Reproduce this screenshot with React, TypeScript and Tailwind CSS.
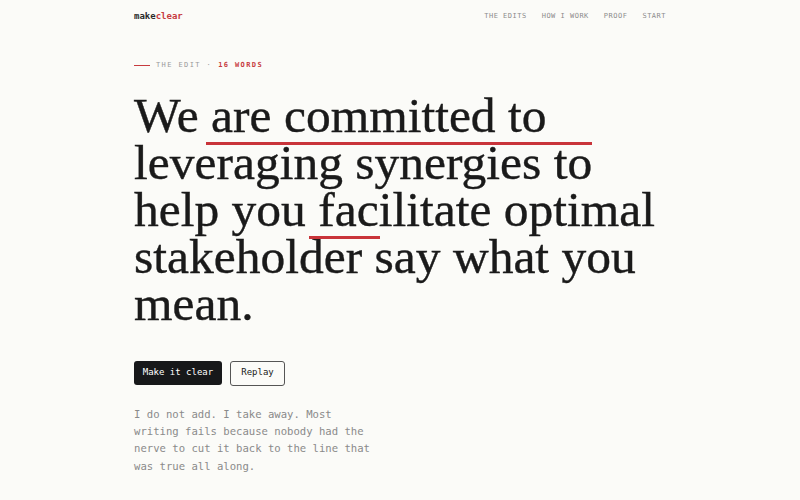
import React from "react"

const mono = "font-['DejaVu_Sans_Mono','Liberation_Mono',monospace]"
const serif = "font-['Liberation_Serif','DejaVu_Serif',serif]"

const navItems = ["THE EDITS", "HOW I WORK", "PROOF", "START"]

export default function App() {
  return (
    <main className="min-h-screen bg-[#fbfbf8] text-[#1a1a1a]">
      <div className="mx-auto w-[532px]">
        {/* Top bar */}
        <header className="flex h-[33px] items-center justify-between">
          <div className={`${mono} text-[9px] font-bold`}>
            <span className="text-[#2a2a2a]">make</span>
            <span className="text-[#c73b3f]">clear</span>
          </div>
          <nav className={`${mono} flex gap-[15px] text-[7px] tracking-[0.5px] text-[#8c8c8c]`}>
            {navItems.map((item) => (
              <a key={item} href="#">
                {item}
              </a>
            ))}
          </nav>
        </header>

        {/* Eyebrow */}
        <div className={`${mono} mt-[27px] flex items-center gap-[6px] text-[7px] tracking-[0.2em]`}>
          <span className="h-px w-[16px] bg-[#c73b3f]" />
          <span className="text-[#9a9a9a]">THE EDIT ·</span>
          <span className="font-bold text-[#c73b3f]">16 WORDS</span>
        </div>

        {/* Headline with the strike-through edits drawn under the cut words */}
        <h1 className={`${serif} mt-[21px] text-[49.5px] leading-[47px] text-[#1a1a1a] [-webkit-text-stroke:0.4px_#1a1a1a]`}>
          <span className="block">
            We{" "}
            <span className="relative">
              are committed to
              <span className="absolute left-[-5px] top-[54px] h-[3px] w-[386px] bg-[#c9343a]" />
            </span>
          </span>
          <span className="block">leveraging synergies to</span>
          <span className="block">
            help you{" "}
            <span className="relative">
              facilitate
              <span className="absolute left-[-9px] top-[54px] h-[3px] w-[71px] bg-[#c9343a]" />
            </span>{" "}
            optimal
          </span>
          <span className="block">stakeholder say what you</span>
          <span className="block">mean.</span>
        </h1>

        {/* Actions */}
        <div className={`${mono} mt-[34px] flex gap-[8px] text-[9px]`}>
          <button className="h-[24px] w-[88px] rounded-[3px] bg-[#17181a] text-white">Make it clear</button>
          <button className="h-[25px] w-[55px] rounded-[3px] border border-[#555] text-[#1a1a1a]">Replay</button>
        </div>

        <p className={`${mono} mt-[20px] w-[236px] text-[10.6px] leading-[17.4px] text-[#8a8a8a]`}>
          I do not add. I take away. Most writing fails because nobody had the nerve to cut it back to the line that
          was true all along.
        </p>
      </div>
    </main>
  )
}
